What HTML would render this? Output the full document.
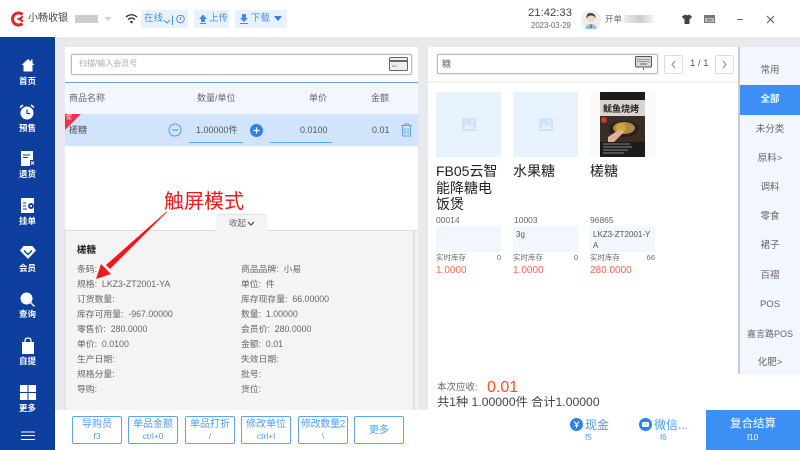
<!DOCTYPE html>
<html><head><meta charset="utf-8"><style>
html,body{margin:0;padding:0;width:800px;height:450px;overflow:hidden;background:#e9eaec}
body{position:relative;font-family:"Liberation Sans","Noto Sans CJK SC",sans-serif;color:#555}
div,span,svg{position:absolute;box-sizing:border-box}
.t{white-space:nowrap;line-height:1}
.nav{left:0;width:55px;text-align:center;color:#fff;font-size:8.5px;font-weight:bold;line-height:10px}
.cat{left:740px;width:60px;text-align:center;font-size:9.5px;color:#666;line-height:12px}
.l{font-size:8.8px;color:#666;white-space:nowrap;line-height:11px}
.btn{top:416px;width:50px;height:28px;border:1px solid #5ba4f8;border-radius:2px;background:#fff;color:#4d9bf7;text-align:center;font-size:10px;line-height:12px;padding-top:2px}
.btn small{display:block;font-size:8.5px;line-height:10px}
.ph{top:92px;width:65px;height:65px;background:#e8f2fe}
.gd{font-size:14px;line-height:16.5px;color:#222}
.code{font-size:8.5px;color:#666;line-height:10px;white-space:nowrap}
.spec{top:226px;width:65px;height:26px;background:#f2f6fe;font-size:8px;color:#555;line-height:11px;padding:3px}
.st{top:253px;width:65px;font-size:7.5px;color:#666;line-height:10px}
.pr{top:265px;font-size:10px;color:#f5694c;line-height:12px}
</style></head><body>
<!-- top bar -->
<div style="left:0;top:0;width:800px;height:37px;background:#fff"></div>
<svg style="left:11px;top:11px" width="15" height="16" viewBox="0 0 15 16"><path d="M11.5 3.500A6 6 0 1 0 11.500 12.500" fill="none" stroke="#e0262b" stroke-width="3"/><path d="M11 8H6.500M12 5.500 8 8l4 2.500" fill="none" stroke="#e0262b" stroke-width="2"/></svg>
<div class="t" style="left:28px;top:14px;font-size:10px;color:#444">小畅收银</div>
<div style="left:75px;top:15px;width:23px;height:8px;background:#ccc"></div>
<div style="left:105px;top:17px;width:0;height:0;border:3px solid transparent;border-top:4px solid #ccc"></div>
<svg style="left:125px;top:13px" width="13" height="11" viewBox="0 0 13 11"><path d="M1 4Q6.500 -.5 12 4M3 6.500Q6.500 3.500 10 6.500" fill="none" stroke="#222" stroke-width="1.300"/><circle cx="6.500" cy="9" r="1.200" fill="#222"/></svg>
<div style="left:141px;top:10px;width:47px;height:18px;background:#e8f2fe"></div>
<div class="t" style="left:144px;top:14px;font-size:9.5px;color:#4a90e2">在线</div>
<svg style="left:163px;top:15px" width="26" height="11" viewBox="0 0 26 11"><path d="M1 5l3 3 3-3" fill="none" stroke="#4a90e2"/><path d="M9.500 .5V10" stroke="#4a90e2"/><circle cx="17.500" cy="4" r="3.800" fill="none" stroke="#4a90e2"/><path d="M17.500 2v3" stroke="#4a90e2"/></svg>
<div style="left:194px;top:10px;width:35px;height:18px;background:#e8f2fe"></div>
<svg style="left:198px;top:14px" width="10" height="10" viewBox="0 0 10 10"><path d="M5 .5 9 5H7V8H3V5H1zM2 9h6v1H2z" fill="#3f8ce8"/></svg>
<div class="t" style="left:209px;top:14px;font-size:9.5px;color:#4a90e2">上传</div>
<div style="left:235px;top:10px;width:52px;height:18px;background:#e8f2fe"></div>
<svg style="left:239px;top:14px" width="10" height="10" viewBox="0 0 10 10"><path d="M3 0H7V4H9L5 8 1 4H3zM1 9h8v1H1z" fill="#3f8ce8"/></svg>
<div class="t" style="left:251px;top:14px;font-size:9.5px;color:#4a90e2">下载</div>
<div style="left:274px;top:16px;width:0;height:0;border:4px solid transparent;border-top:5px solid #2f80e8"></div>
<div class="t" style="left:528px;top:8px;font-size:11.300px;color:#444">21:42:33</div>
<div class="t" style="left:531px;top:22px;font-size:7.800px;color:#666">2023-03-29</div>
<svg style="left:581px;top:10px" width="20" height="20" viewBox="0 0 20 20"><circle cx="10" cy="10" r="10" fill="#eee"/><path d="M4 19q1-5 6-5t6 5z" fill="#8fc1ea"/><circle cx="10" cy="8" r="4.200" fill="#f6d7c3"/><path d="M5.500 9Q5 2.500 10 3t4.500 6Q14 5.500 10 5.500 6.500 5.500 5.500 9z" fill="#444"/><path d="M9.500 14h1l.5 4h-2z" fill="#d24a3c"/></svg>
<div class="t" style="left:605px;top:15px;font-size:8.500px;color:#666">开单</div>
<div style="left:624px;top:15px;width:32px;height:8px;background:linear-gradient(90deg,#eee,#ccc 50%,#eee 85%,#fff)"></div>
<svg style="left:682px;top:14px" width="10" height="10" viewBox="0 0 10 10"><path d="M3 .5 0 2.500 1.500 5 2.500 4.500V10H7.500V4.500L8.500 5 10 2.500 7 .5Q5 2 3 .5z" fill="#444"/></svg>
<svg style="left:704px;top:15px" width="11" height="9" viewBox="0 0 11 9"><rect width="11" height="8" fill="#777"/><rect x="1" y="3" width="9" height="4" fill="#bbb"/><path d="M3 5h5" stroke="#666"/></svg>
<div style="left:737px;top:19px;width:6px;height:1px;background:#666"></div>
<svg style="left:766px;top:15px" width="9" height="9" viewBox="0 0 9 9"><path d="M1 1l7 7M8 1 1 8" stroke="#555" stroke-width="1"/></svg>

<!-- sidebar -->
<div style="left:0;top:37px;width:55px;height:413px;background:#0e3f9e"></div>
<svg style="left:21px;top:58px" width="14" height="14" viewBox="0 0 14 14"><path d="M7 1 0.500 7H2.500V13.500H11.500V7H13.500L11.500 5V1.500H10V3.500z" fill="#fff"/></svg>
<div class="nav" style="top:76px">首页</div>
<svg style="left:19px;top:104px" width="16" height="16" viewBox="0 0 16 16"><circle cx="8" cy="9" r="6.500" fill="#fff"/><path d="M1 3.500 4 1M15 3.500 12 1" stroke="#fff" stroke-width="1.500"/><path d="M8 5.500V9.500H11" stroke="#0e3f9e" fill="none" stroke-width="1.200"/></svg>
<div class="nav" style="top:123px">预售</div>
<svg style="left:21px;top:151px" width="14" height="16" viewBox="0 0 14 16"><path d="M0 0H12V9H9V15H0z" fill="#fff"/><path d="M2 4H9M2 6.500H7" stroke="#0e3f9e"/><path d="M10 10.500l3 3M13 10.500l-3 3" stroke="#fff"/></svg>
<div class="nav" style="top:169px">退货</div>
<svg style="left:21px;top:198px" width="14" height="15" viewBox="0 0 14 15"><rect width="13" height="15" fill="#fff"/><path d="M2 5H5M2 8H5M2 11H6" stroke="#0e3f9e"/><circle cx="10" cy="8" r="3" fill="#0e3f9e"/><circle cx="10" cy="8" r="1" fill="#fff"/></svg>
<div class="nav" style="top:216px">挂单</div>
<svg style="left:20px;top:246px" width="16" height="13" viewBox="0 0 16 13"><path d="M3.500 0H12.500L16 4.500 8 13 0 4.500zM3.500 5 8 9.500 12.500 5 11.500 4 8 7.500 4.500 4z" fill="#fff" fill-rule="evenodd"/></svg>
<div class="nav" style="top:263px">会员</div>
<svg style="left:20px;top:292px" width="15" height="15" viewBox="0 0 15 15"><circle cx="6.500" cy="6.500" r="6" fill="#fff"/><path d="M10.500 10.500 14.500 14.500" stroke="#fff" stroke-width="1.300"/></svg>
<div class="nav" style="top:309px">查询</div>
<svg style="left:21px;top:337px" width="14" height="17" viewBox="0 0 14 17"><path d="M1 5H13V17H1z" fill="#fff"/><path d="M4 6.500V3.500Q4 1 7 1t3 2.500V6.500" fill="none" stroke="#fff" stroke-width="1.200"/></svg>
<div class="nav" style="top:356px">自提</div>
<svg style="left:20px;top:385px" width="16" height="15" viewBox="0 0 16 15"><path d="M0 0H7.500V7H0zM8.500 0H16V7H8.500zM0 8H7.500V15H0zM8.500 8H16V15H8.500z" fill="#fff"/></svg>
<div class="nav" style="top:403px">更多</div>
<svg style="left:21px;top:431px" width="14" height="10" viewBox="0 0 14 10"><path d="M0 1H14M0 4.500H14M0 8.500H14" stroke="#fff" stroke-width="1"/></svg>

<!-- left panel -->
<div style="left:65px;top:47px;width:353px;height:363px;background:#fff"></div>
<div style="left:71px;top:54px;width:341px;height:21px;background:#fff;border:1px solid #bbb;border-radius:2px;box-shadow:0 0 1px #999"></div>
<div class="t" style="left:79px;top:60px;font-size:8px;color:#aaa">扫描/输入会员号</div>
<svg style="left:389px;top:57px" width="19" height="15" viewBox="0 0 19 15"><rect x=".5" y=".5" width="18" height="13" rx="1" fill="#eee" stroke="#666"/><path d="M1 4H18" stroke="#666" stroke-width="2"/><path d="M3 9H8" stroke="#999"/></svg>
<div style="left:65px;top:82px;width:353px;height:32px;background:#f2f6fe;border-top:1px solid #5ba4f8"></div>
<div class="t" style="left:69px;top:94px;font-size:9px;color:#666">商品名称</div>
<div class="t" style="left:197px;top:94px;font-size:9px;color:#666">数量/单位</div>
<div class="t" style="left:309px;top:94px;font-size:9px;color:#666">单价</div>
<div class="t" style="left:371px;top:94px;font-size:9px;color:#666">金额</div>
<div style="left:65px;top:114px;width:353px;height:32px;background:#d2e4fb"></div>
<svg style="left:65px;top:114px" width="16" height="16" viewBox="0 0 16 16"><path d="M0 0H16L0 16z" fill="#f0304a"/></svg>
<div class="t" style="left:66px;top:115px;font-size:6px;color:#fff">促</div>
<div class="t" style="left:69px;top:126px;font-size:9px;color:#555">槎糖</div>
<svg style="left:168px;top:123px" width="14" height="14" viewBox="0 0 14 14"><circle cx="7" cy="7" r="6" fill="none" stroke="#4d9bf7"/><path d="M4 7H10" stroke="#4d9bf7" stroke-width="1.200"/></svg>
<div class="t" style="left:196px;top:126px;font-size:9px;color:#555">1.00000件</div>
<div style="left:189px;top:142px;width:54px;height:1px;background:#5ba4f8"></div>
<svg style="left:250px;top:124px" width="13" height="13" viewBox="0 0 13 13"><circle cx="6.500" cy="6.500" r="6.500" fill="#2f80e8"/><path d="M3.500 6.500H9.500M6.500 3.500V9.500" stroke="#fff" stroke-width="1.200"/></svg>
<div class="t" style="left:300px;top:126px;font-size:9px;color:#555">0.0100</div>
<div style="left:270px;top:142px;width:62px;height:1px;background:#5ba4f8"></div>
<div class="t" style="left:372px;top:126px;font-size:9px;color:#555">0.01</div>
<svg style="left:400px;top:123px" width="13" height="14" viewBox="0 0 13 14"><path d="M1 2.500H12M4.500 2.500V1H8.500V2.500M2.500 2.500V13H10.500V2.500M5 5V11M8 5V11" fill="none" stroke="#5ba4f8"/></svg>

<div style="left:65px;top:230px;width:353px;height:180px;background:#f4f4f4;border-top:1px solid #ddd"></div>
<div style="left:64px;top:229px;width:2px;height:181px;background:#e4e4e4"></div>
<div style="left:413px;top:230px;width:2px;height:180px;background:#e2e2e2"></div>
<div style="left:216px;top:215px;width:51px;height:16px;background:#f4f4f4;border-radius:3px 3px 0 0;box-shadow:0 -1px 1px #ddd"></div>
<div class="t" style="left:229px;top:219px;font-size:8.500px;color:#666">收起</div>
<svg style="left:247px;top:221px" width="8" height="6" viewBox="0 0 8 6"><path d="M1 1l3 3 3-3" fill="none" stroke="#444" stroke-width="1.200"/></svg>
<div class="t" style="left:77px;top:246px;font-size:9.500px;font-weight:bold;color:#222">槎糖</div>
<div class="l" style="left:77px;top:264px">条码:</div>
<div class="l" style="left:77px;top:279px">规格:&nbsp;&nbsp;LKZ3-ZT2001-YA</div>
<div class="l" style="left:77px;top:294px">订货数量:</div>
<div class="l" style="left:77px;top:309px">库存可用量:&nbsp;&nbsp;-967.00000</div>
<div class="l" style="left:77px;top:324px">零售价:&nbsp;&nbsp;280.0000</div>
<div class="l" style="left:77px;top:339px">单价:&nbsp;&nbsp;0.0100</div>
<div class="l" style="left:77px;top:354px">生产日期:</div>
<div class="l" style="left:77px;top:369px">规格分量:</div>
<div class="l" style="left:77px;top:384px">导购:</div>
<div class="l" style="left:241px;top:264px">商品品牌:&nbsp;&nbsp;小易</div>
<div class="l" style="left:241px;top:279px">单位:&nbsp;&nbsp;件</div>
<div class="l" style="left:241px;top:294px">库存现存量:&nbsp;&nbsp;66.00000</div>
<div class="l" style="left:241px;top:309px">数量:&nbsp;&nbsp;1.00000</div>
<div class="l" style="left:241px;top:324px">会员价:&nbsp;&nbsp;280.0000</div>
<div class="l" style="left:241px;top:339px">金额:&nbsp;&nbsp;0.01</div>
<div class="l" style="left:241px;top:354px">失效日期:</div>
<div class="l" style="left:241px;top:369px">批号:</div>
<div class="l" style="left:241px;top:384px">货位:</div>

<!-- annotation -->
<div class="t" style="left:164px;top:192px;font-size:20px;color:#f01818">触屏模式</div>
<svg style="left:90px;top:205px" width="85" height="80" viewBox="0 0 85 80"><path d="M77 7 76.500 6.500 16 60 20 64z" fill="#f01818"/><path d="M6 74 11 59 21 69z" fill="#f01818"/></svg>

<!-- right product panel -->
<div style="left:428px;top:47px;width:310px;height:327px;background:#fff"></div>
<div style="left:738px;top:47px;width:2px;height:327px;background:#ccc"></div>
<div style="left:437px;top:54px;width:221px;height:20px;background:#fff;border:1px solid #bbb;border-radius:2px;box-shadow:0 0 1px #999"></div>
<div class="t" style="left:442px;top:60px;font-size:9px;color:#666">糖</div>
<svg style="left:635px;top:56px" width="18" height="15" viewBox="0 0 18 15"><rect x=".5" y=".5" width="16" height="10.500" rx="1" fill="#d8d8d8" stroke="#555"/><path d="M2.500 3.500H15M2.500 5.500H15" stroke="#666" stroke-dasharray="1 1"/><path d="M5 8H12" stroke="#666"/><path d="M8.500 12v2" stroke="#666"/></svg>
<div style="left:664px;top:55px;width:19px;height:19px;border:1px solid #ddd;border-radius:2px"></div>
<svg style="left:670px;top:60px" width="7" height="9" viewBox="0 0 7 9"><path d="M5 1 2 4.500 5 8" fill="none" stroke="#888"/></svg>
<div class="t" style="left:690px;top:59px;font-size:9.500px;color:#555">1 / 1</div>
<div style="left:715px;top:55px;width:19px;height:19px;border:1px solid #ddd;border-radius:2px"></div>
<svg style="left:721px;top:60px" width="7" height="9" viewBox="0 0 7 9"><path d="M2 1 5 4.500 2 8" fill="none" stroke="#888"/></svg>
<div style="left:428px;top:81px;width:310px;height:2px;background:#f2f2f2"></div>

<div class="ph" style="left:436px"></div>
<svg style="left:462px;top:118px" width="14" height="13" viewBox="0 0 14 13"><rect width="14" height="13" rx="1" fill="#cfe2fb"/><path d="M1 11 5 6l3 3 2-2 3 4z" fill="#e8f2fe"/><circle cx="10" cy="3.500" r="1.300" fill="#e8f2fe"/></svg>
<div class="ph" style="left:513px"></div>
<svg style="left:539px;top:118px" width="14" height="13" viewBox="0 0 14 13"><rect width="14" height="13" rx="1" fill="#cfe2fb"/><path d="M1 11 5 6l3 3 2-2 3 4z" fill="#e8f2fe"/><circle cx="10" cy="3.500" r="1.300" fill="#e8f2fe"/></svg>
<div class="ph" style="left:590px;background:#fafafa"></div>
<svg style="left:600px;top:92px" width="45" height="65" viewBox="0 0 45 65">
<rect width="45" height="65" fill="#1c1a1a"/><rect y="8" width="45" height="16" fill="#d9d5cc"/><rect y="24" width="45" height="26" fill="#3a2d26"/><ellipse cx="24" cy="37" rx="15" ry="8" fill="#2a2018"/><ellipse cx="24" cy="36" rx="11" ry="6" fill="#b08a45"/><circle cx="21" cy="36" r="5" fill="#d9a03a"/><path d="M8 45 20 37 24 40 14 50H8z" fill="#e0b09a"/><circle cx="4" cy="28" r="3" fill="#c8392f"/><path d="M3 52H30M3 55H32M3 58H28M3 61H24" stroke="#888" stroke-width="1"/>
<text x="3" y="20" font-size="9" font-weight="bold" fill="#222" font-family="Liberation Sans,Noto Sans CJK SC,sans-serif">鱿鱼烧烤</text></svg>

<div class="gd" style="left:436px;top:163px;width:68px">FB05云智能降糖电饭煲</div>
<div class="gd" style="left:513px;top:163px">水果糖</div>
<div class="gd" style="left:590px;top:163px">槎糖</div>
<div class="code" style="left:436px;top:215px">00014</div>
<div class="code" style="left:514px;top:215px">10003</div>
<div class="code" style="left:590px;top:215px">96865</div>
<div class="spec" style="left:436px"></div>
<div class="spec" style="left:513px">3g</div>
<div class="spec" style="left:590px">LKZ3-ZT2001-Y<br>A</div>
<div class="st" style="left:436px">实时库存<span style="right:0;top:0">0</span></div>
<div class="st" style="left:513px">实时库存<span style="right:0;top:0">0</span></div>
<div class="st" style="left:590px">实时库存<span style="right:0;top:0">66</span></div>
<div class="pr" style="left:436px">1.0000</div>
<div class="pr" style="left:513px">1.0000</div>
<div class="pr" style="left:590px">280.0000</div>

<!-- category -->
<div style="left:740px;top:47px;width:60px;height:327px;background:#f2f6fe"></div>
<div class="cat" style="top:65px">常用</div>
<div style="left:740px;top:85px;width:60px;height:30px;background:#3d8ff5"></div>
<div class="cat" style="top:94px;color:#fff;font-weight:bold">全部</div>
<div class="cat" style="top:124px">未分类</div>
<div class="cat" style="top:153px">原料&gt;</div>
<div class="cat" style="top:182px">调料</div>
<div class="cat" style="top:211px">零食</div>
<div class="cat" style="top:240px">裙子</div>
<div class="cat" style="top:270px">百褶</div>
<div class="cat" style="top:299px">POS</div>
<div class="cat" style="top:328px;font-size:9px">嘉言路POS</div>
<div class="cat" style="top:357px">化肥&gt;</div>

<!-- bottom -->
<div style="left:428px;top:374px;width:372px;height:76px;background:#fff"></div>
<div style="left:55px;top:410px;width:373px;height:40px;background:#fff"></div>
<div class="t" style="left:437px;top:383px;font-size:9.500px;color:#666">本次应收:</div>
<div class="t" style="left:487px;top:380px;font-size:16px;color:#f5501e">0.01</div>
<div class="t" style="left:437px;top:396px;font-size:12.200px;color:#444">共1种 1.00000件 合计1.00000</div>
<div class="btn" style="left:72px">导购员<small>f3</small></div>
<div class="btn" style="left:128px">单品金额<small>ctrl+0</small></div>
<div class="btn" style="left:185px">单品打折<small>/</small></div>
<div class="btn" style="left:241px">修改单位<small>ctrl+l</small></div>
<div class="btn" style="left:298px;letter-spacing:-.3px;padding-left:0;padding-right:0">修改数量2<small>\</small></div>
<div class="btn" style="left:354px;padding-top:8px;font-size:10px">更多</div>
<svg style="left:570px;top:418px" width="13" height="13" viewBox="0 0 13 13"><circle cx="6.500" cy="6.500" r="6.500" fill="#2f80e8"/><path d="M4 3.500 6.500 6.500 9 3.500M6.500 6.500V10M4.500 7.500H8.500" fill="none" stroke="#fff"/></svg>
<div class="t" style="left:585px;top:419px;font-size:12px;color:#4d9bf7">现金</div>
<div class="t" style="left:585px;top:434px;font-size:8px;color:#4d9bf7">f5</div>
<svg style="left:639px;top:418px" width="13" height="13" viewBox="0 0 13 13"><circle cx="6.500" cy="6.500" r="6.500" fill="#2f80e8"/><rect x="3" y="4" width="7" height="5" rx="1.500" fill="#fff"/><path d="M5 6H5.800M7.200 6H8" stroke="#2f80e8"/></svg>
<div class="t" style="left:654px;top:419px;font-size:12px;color:#4d9bf7">微信...</div>
<div class="t" style="left:660px;top:434px;font-size:8px;color:#4d9bf7">f6</div>
<div style="left:706px;top:410px;width:94px;height:40px;background:#3d8ff5"></div>
<div class="t" style="left:730px;top:419px;font-size:11.500px;color:#fff">复合结算</div>
<div class="t" style="left:747px;top:434px;font-size:8px;color:#fff">f10</div>
</body></html>
